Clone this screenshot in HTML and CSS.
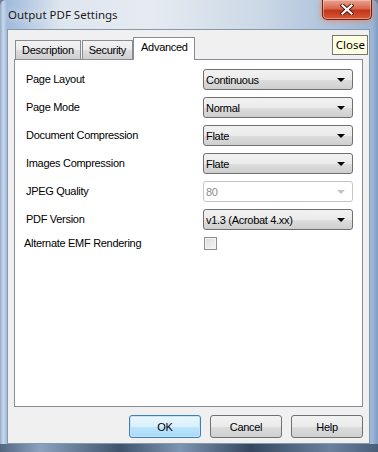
FILE: index.html
```html
<!DOCTYPE html>
<html lang="en">
<head>
    <meta charset="UTF-8">
    <title>Output PDF Settings</title>
    <link rel="stylesheet" href="styles.css">
</head>
<body>
    <div class="window">
        <div class="titlebar">
            <span class="title">Output PDF Settings</span>
            <button class="close-btn" aria-label="Close">
                <svg width="14" height="11" viewBox="0 0 14 11">
                    <path d="M2.5 1.5 L11.5 9.5 M11.5 1.5 L2.5 9.5" stroke="#4a1208" stroke-width="4" stroke-linecap="square"/>
                    <path d="M2.5 1.5 L11.5 9.5 M11.5 1.5 L2.5 9.5" stroke="#fff" stroke-width="2.2" stroke-linecap="square"/>
                </svg>
            </button>
        </div>

        <div class="client">
            <div class="tabs">
                <div class="tab">Description</div>
                <div class="tab">Security</div>
                <div class="tab active">Advanced</div>
            </div>

            <div class="panel">
                <div class="form">
                    <label>Page Layout</label>
                    <div class="combo"><span>Continuous</span><i class="arrow"></i></div>

                    <label>Page Mode</label>
                    <div class="combo"><span>Normal</span><i class="arrow"></i></div>

                    <label>Document Compression</label>
                    <div class="combo"><span>Flate</span><i class="arrow"></i></div>

                    <label>Images Compression</label>
                    <div class="combo"><span>Flate</span><i class="arrow"></i></div>

                    <label>JPEG Quality</label>
                    <div class="combo disabled"><span>80</span><i class="arrow"></i></div>

                    <label>PDF Version</label>
                    <div class="combo"><span>v1.3 (Acrobat 4.xx)</span><i class="arrow"></i></div>

                    <label class="shifted">Alternate EMF Rendering</label>
                    <div class="check-cell"><span class="checkbox"></span></div>
                </div>
            </div>

            <div class="buttons">
                <button class="btn btn-default">OK</button>
                <button class="btn">Cancel</button>
                <button class="btn">Help</button>
            </div>

            <div class="tooltip">Close</div>
        </div>
        <div class="frame-bottom"></div>
    </div>
</body>
</html>
```

FILE: styles.css
```css
* {
    margin: 0;
    padding: 0;
    box-sizing: border-box;
}

body {
    width: 378px;
    height: 452px;
    overflow: hidden;
    background: #6d8098;
    font-family: "Liberation Sans", Arial, sans-serif;
    font-size: 11px;
    letter-spacing: -0.3px;
    color: #000;
}

.window {
    width: 378px;
    height: 452px;
    display: flex;
    flex-direction: column;
    position: relative;
    padding: 0 8px 8px 7px;
    background: linear-gradient(90deg, #8eaacb 0, #c8d8e8 3px, #9fbadb 7px, #dde5ee 60px, #e6ebf1 150px, #cbd8e6 260px, #9db7d6 372px, #7f9dc2 378px);
    border-radius: 6px 6px 0 0;
}

.window .frame-bottom {
    position: absolute;
    left: 0;
    right: 0;
    bottom: 0;
    height: 8px;
    z-index: 3;
    background: linear-gradient(90deg, #52667f 0, #8aa3bf 40px, #3f536c 120px, #7d96b3 180px, #34475f 250px, #6a819e 330px, #4a5e78 378px);
}

.titlebar {
    height: 29px;
    flex-shrink: 0;
    display: flex;
    align-items: center;
    position: relative;
}

.title {
    font-family: "Noto Sans", "Open Sans", sans-serif;
    font-size: 11.5px;
    letter-spacing: 0;
    color: #1a1a1a;
    margin-left: 1px;
    text-shadow: 0 0 6px rgba(255, 255, 255, 0.9);
}

.close-btn {
    position: absolute;
    top: 0;
    right: -2px;
    width: 50px;
    height: 20px;
    border: 1px solid #6b231a;
    border-top: none;
    border-radius: 0 0 5px 5px;
    background: linear-gradient(180deg, #e8a393 0, #d9674f 45%, #c4351b 55%, #d55a36 100%);
    box-shadow: 0 0 6px rgba(255, 110, 40, 0.8), inset 0 0 0 1px rgba(255, 210, 190, 0.5);
    display: flex;
    align-items: center;
    justify-content: center;
}

.client {
    flex: 1;
    position: relative;
    background: #f0f0f0;
    border: 1px solid #8798ad;
    padding: 7px 7px 0 6px;
    display: flex;
    flex-direction: column;
}

.tabs {
    display: flex;
    align-items: flex-end;
    height: 22px;
    padding-left: 1px;
    position: relative;
    z-index: 1;
}

.tab {
    height: 19px;
    padding: 0 6px;
    margin-right: 1px;
    border: 1px solid #898c95;
    border-bottom: none;
    background: linear-gradient(180deg, #f2f2f2 0, #ebebeb 50%, #dddddd 51%, #cfcfcf 100%);
    display: flex;
    align-items: center;
}

.tab:nth-child(2) {
    margin-right: 0;
}

.tab.active {
    height: 23px;
    margin-bottom: -1px;
    padding: 3px 6px 0 7px;
    background: #fff;
    align-items: flex-start;
}

.panel {
    width: 349px;
    height: 348px;
    background: #fff;
    border: 1px solid #898c95;
    padding: 9px 9px 0 11px;
}

.form {
    display: grid;
    grid-template-columns: 177px 150px;
    grid-auto-rows: 21px;
    row-gap: 7px;
    align-items: center;
}

.form label {
    line-height: 21px;
}

.form label.shifted {
    align-self: start;
    margin-left: -2px;
    margin-top: -4px;
}

.combo {
    height: 21px;
    border: 1px solid #707070;
    border-radius: 3px;
    background: linear-gradient(180deg, #f2f2f2 0, #ebebeb 50%, #dddddd 51%, #cfcfcf 100%);
    display: flex;
    align-items: center;
    justify-content: space-between;
    padding: 0 7px 0 2px;
}

.arrow {
    width: 0;
    height: 0;
    border-left: 4px solid transparent;
    border-right: 4px solid transparent;
    border-top: 4px solid #000;
}

.combo.disabled {
    background: #fff;
    border-color: #c5c5c5;
    color: #8d8d8d;
}

.combo.disabled .arrow {
    border-top-color: #c2c2c2;
}

.check-cell {
    align-self: start;
    display: flex;
    padding-left: 1px;
}

.checkbox {
    width: 13px;
    height: 13px;
    border: 1px solid #8e8f8f;
    background: linear-gradient(135deg, #dcdcdc 0, #f5f5f5 100%);
    box-shadow: inset 0 0 0 1px #f4f4f4;
}

.buttons {
    display: flex;
    justify-content: flex-end;
    gap: 9px;
    padding-top: 8px;
    width: 349px;
}

.btn {
    width: 72px;
    height: 23px;
    border: 1px solid #707070;
    border-radius: 3px;
    background: linear-gradient(180deg, #f2f2f2 0, #ebebeb 50%, #dddddd 51%, #cfcfcf 100%);
    font-family: "Liberation Sans", Arial, sans-serif;
    font-size: 11px;
    letter-spacing: -0.3px;
    color: #000;
}

.btn-default {
    border-color: #3c7fb1;
    background: linear-gradient(180deg, #eaf6fd 0, #d9f0fc 50%, #bee6fd 51%, #a7d9f5 100%);
    box-shadow: inset 0 0 0 1px #c4e5f6;
}

.tooltip {
    position: absolute;
    top: 5px;
    right: 1px;
    padding: 2px 2px 2px 3px;
    background: #ffffe1;
    border: 1px solid #767676;
    font-family: "Noto Sans", "Open Sans", sans-serif;
    font-size: 11.5px;
    letter-spacing: 0;
    line-height: 14px;
    z-index: 2;
}
```
